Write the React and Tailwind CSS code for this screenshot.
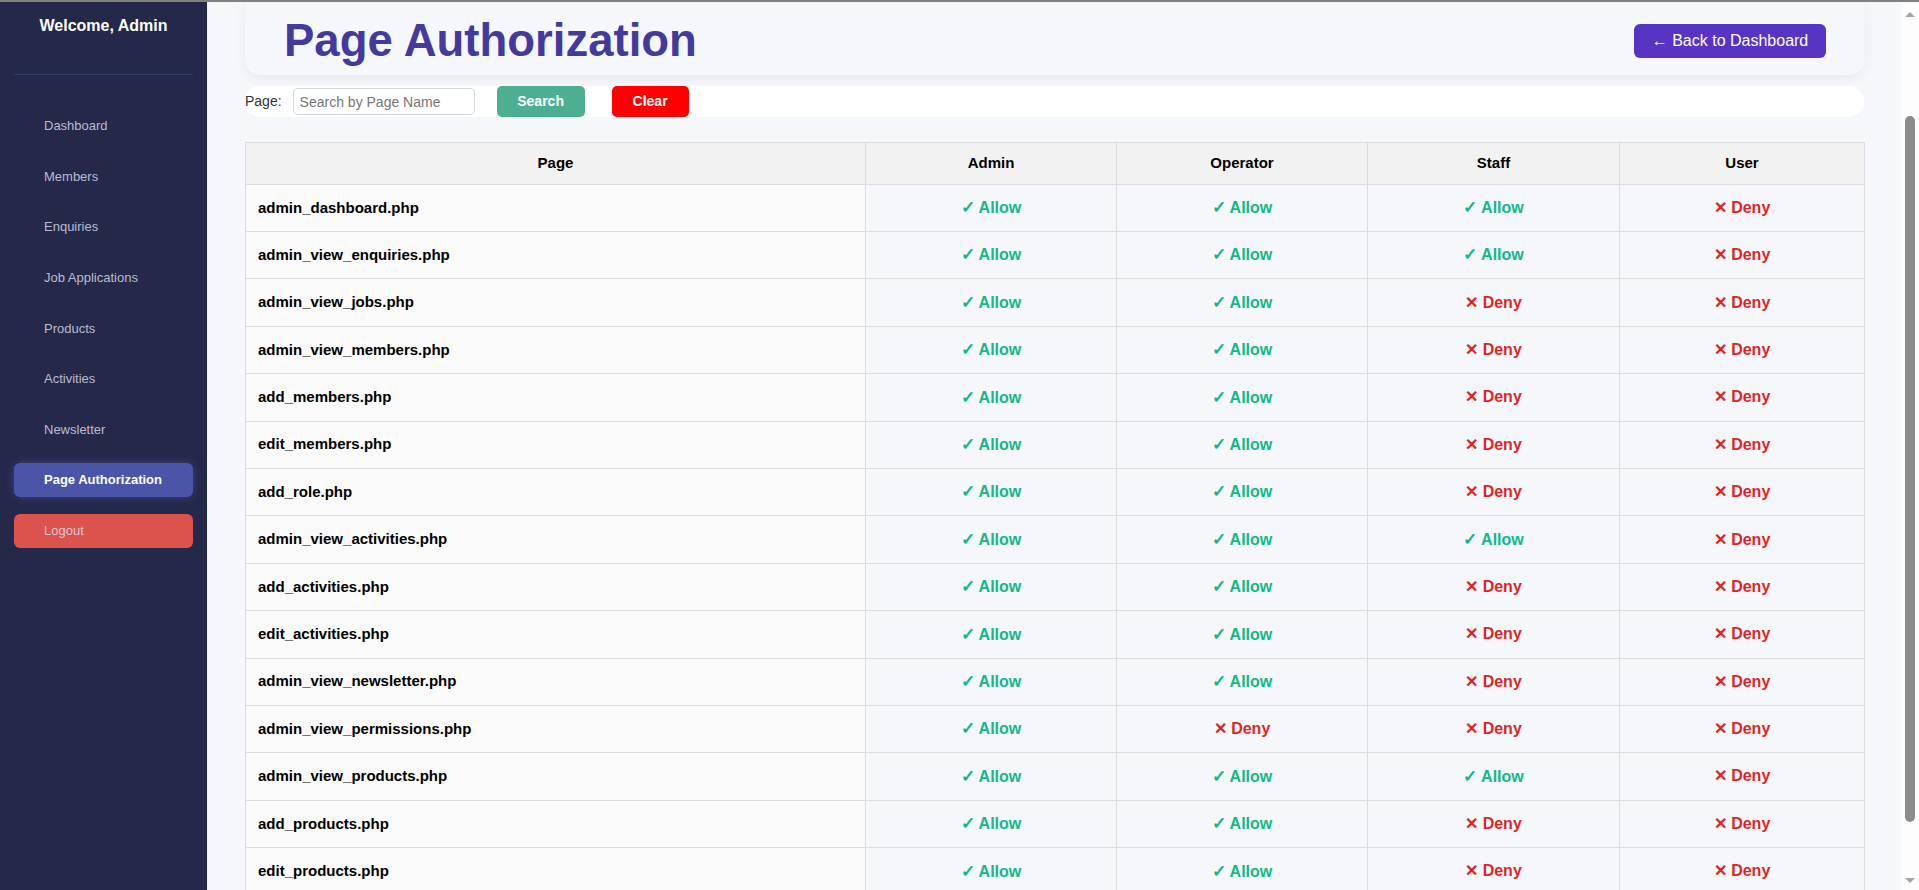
import React from "react";

const navItems = [
  "Dashboard",
  "Members",
  "Enquiries",
  "Job Applications",
  "Products",
  "Activities",
  "Newsletter",
];

// A = allow, D = deny ; order: admin, operator, staff, user
const rows = [
  ["admin_dashboard.php", "AAAD"],
  ["admin_view_enquiries.php", "AAAD"],
  ["admin_view_jobs.php", "AADD"],
  ["admin_view_members.php", "AADD"],
  ["add_members.php", "AADD"],
  ["edit_members.php", "AADD"],
  ["add_role.php", "AADD"],
  ["admin_view_activities.php", "AAAD"],
  ["add_activities.php", "AADD"],
  ["edit_activities.php", "AADD"],
  ["admin_view_newsletter.php", "AADD"],
  ["admin_view_permissions.php", "ADDD"],
  ["admin_view_products.php", "AAAD"],
  ["add_products.php", "AADD"],
  ["edit_products.php", "AADD"],
];

function Perm({ v }) {
  if (v === "A") {
    return (
      <span className="text-[#12b886] font-bold text-[16px]">
        <span className="text-[17px]">✓</span> Allow
      </span>
    );
  }
  return (
    <span className="text-[#dc2626] font-bold text-[16px]">
      <span className="text-[16px]">✕</span> Deny
    </span>
  );
}

function Sidebar() {
  return (
    <aside className="w-[207px] shrink-0 bg-[#242849] flex flex-col">
      <div className="pt-[15px] text-center text-white font-bold text-[16px] leading-[18px]">
        Welcome, Admin
      </div>
      <div className="mt-[39px] mx-[14px] h-px bg-[#2f3e68]" />
      <nav className="mt-[34px] flex flex-col gap-[16.6px]">
        {navItems.map((item) => (
          <div
            key={item}
            className="mx-[14px] h-[34px] rounded-[6px] pl-[30px] flex items-center text-[13px] text-[#b9bdd3]"
          >
            {item}
          </div>
        ))}
        <div className="mx-[14px] h-[34px] rounded-[6px] pl-[30px] flex items-center text-[13px] font-bold text-white bg-[#4a55a8] shadow-[0_0_10px_rgba(90,100,200,0.45)]">
          Page Authorization
        </div>
        <div className="mx-[14px] h-[34px] rounded-[6px] pl-[30px] flex items-center text-[13px] text-[#dcc6d6] bg-[#dc524c]">
          Logout
        </div>
      </nav>
    </aside>
  );
}

function Scrollbar() {
  return (
    <div className="w-[18px] shrink-0 bg-[#fdfdfd] flex flex-col items-center">
      <div className="mt-[10px] w-0 h-0 border-l-[5px] border-r-[5px] border-b-[5px] border-l-transparent border-r-transparent border-b-[#a3a3a3]" />
      <div className="mt-[99px] w-[10px] h-[706px] rounded-full bg-[#8c8c8c]" />
      <div className="mt-[56px] w-0 h-0 border-l-[5px] border-r-[5px] border-t-[5px] border-l-transparent border-r-transparent border-t-[#a3a3a3]" />
    </div>
  );
}

export default function App() {
  return (
    <div className="h-[890px] flex flex-col overflow-hidden font-['Liberation_Sans',Arial,sans-serif]">
      <div className="h-[2px] bg-[#808080] shrink-0" />
      <div className="flex flex-1 min-h-0">
        <Sidebar />
        <main className="flex-1 min-w-0 bg-[#f5f7fb] pl-[38px] pr-[37px] overflow-hidden">
          <div className="h-[73px] pt-[5px] pl-[39px] pr-[38px] flex items-center justify-between bg-[#f6f7fa] rounded-b-[15px] shadow-[0_4px_12px_rgba(0,0,0,0.06)]">
            <h1 className="text-[45.5px] leading-none font-bold text-[#443a9e]">
              Page Authorization
            </h1>
            <button className="w-[192px] h-[34px] rounded-[6px] bg-[#5834c4] text-white text-[16px] flex items-center justify-center">
              ← Back to Dashboard
            </button>
          </div>

          <div className="mt-[11px] h-[31px] bg-white rounded-[15px] flex items-center">
            <span className="text-[14px] text-[#333]">Page:</span>
            <input
              className="ml-[11px] w-[182px] h-[27px] border border-[#cfd6e2] rounded-[5px] px-[6px] text-[14px] outline-none placeholder:text-[#757575]"
              placeholder="Search by Page Name"
            />
            <button className="ml-[22px] w-[88px] h-[31px] rounded-[5px] bg-[#4caf91] text-white font-bold text-[14px]">
              Search
            </button>
            <button className="ml-[27px] w-[77px] h-[31px] rounded-[5px] bg-[#ff0000] text-white font-bold text-[14px]">
              Clear
            </button>
          </div>

          <table className="mt-[25px] w-full table-fixed border-collapse text-[15px]">
            <colgroup>
              <col className="w-[620px]" />
              <col className="w-[251px]" />
              <col className="w-[251px]" />
              <col className="w-[252px]" />
              <col className="w-[245px]" />
            </colgroup>
            <thead>
              <tr className="bg-[#f2f2f2] h-[41.6px]">
                {["Page", "Admin", "Operator", "Staff", "User"].map((h) => (
                  <th
                    key={h}
                    className="border border-[#dddddd] font-bold text-black text-center"
                  >
                    {h}
                  </th>
                ))}
              </tr>
            </thead>
            <tbody>
              {rows.map(([page, perms]) => (
                <tr key={page} className="h-[47.4px]">
                  <td className="border border-[#dddddd] bg-[#fafafa] pl-[12px] font-bold text-black">
                    {page}
                  </td>
                  {perms.split("").map((v, i) => (
                    <td
                      key={i}
                      className="border border-[#dddddd] text-center"
                    >
                      <Perm v={v} />
                    </td>
                  ))}
                </tr>
              ))}
            </tbody>
          </table>
        </main>
        <Scrollbar />
      </div>
    </div>
  );
}
